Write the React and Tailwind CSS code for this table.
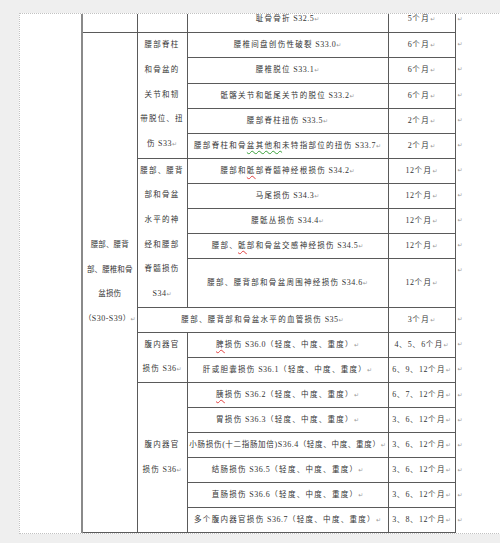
const M = () => (
  <span className="font-['DejaVu_Sans',sans-serif] text-[6px] text-[#9a9a9a] tracking-normal">↵</span>
);

// split a string into CJK runs (inherit tracking) and latin runs (own tracking)
const tx = (s) =>
  s.split(/([A-Za-z0-9.\-() ]+)/).filter(Boolean).map((p, i) =>
    /^[A-Za-z0-9.\-() ]+$/.test(p) ? (
      <span key={i} className="text-[8px] tracking-[0.5px]">{p}</span>
    ) : (
      <span key={i}>{p}</span>
    )
  );

const Red = ({ children }) => (
  <span className="underline decoration-wavy decoration-[#e04040] underline-offset-[2px] decoration-[0.5px]">{children}</span>
);
const Green = ({ children }) => (
  <span className="underline decoration-wavy decoration-[#3aa03a] underline-offset-[2px] decoration-[0.5px]">{children}</span>
);

const c3cls = "border border-[#5a5a5a] p-0 text-center align-middle whitespace-nowrap leading-[24px] tracking-[1.3px]";
const c3tight = "border border-[#5a5a5a] p-0 text-center align-middle whitespace-nowrap leading-[24px] tracking-[0.7px]";
const c4cls = "border border-[#5a5a5a] p-0 text-center align-middle whitespace-nowrap leading-[24px] tracking-[1.4px]";
const multi = "border border-[#5a5a5a] p-0 text-center align-middle whitespace-nowrap leading-[24.7px] tracking-[1.2px]";
const col1 = "border-t border-b border-r border-l-2 border-[#5a5a5a] border-l-[#8a8a8a] p-0 text-center align-middle whitespace-nowrap leading-[24.7px] tracking-[0.1px]";
const endCell = "border-0 p-0 pl-[2px] text-left align-top leading-[24px]";

const r0c1 = "border-b border-r border-l-2 border-[#5a5a5a] border-l-[#8a8a8a] p-0";
const r0c2 = "border-b border-r border-[#5a5a5a] p-0";
const r0c3 = "border-b border-r border-[#5a5a5a] p-0 text-center align-top whitespace-nowrap leading-[10px] tracking-[1.3px]";
const r0c4 = "border-b border-r border-[#5a5a5a] p-0 text-center align-top whitespace-nowrap leading-[10px] tracking-[1.4px]";
const r0c5 = "border-0 p-0 pl-[2px] text-left align-top leading-[10px]";

export default function App() {
  const rows = [
    { h: "h-[25px]", c3: <>{tx("腰椎间盘创伤性破裂 S33.0")}<M /></>, c4: "6个月" },
    { h: "h-[26px]", c3: <>{tx("腰椎脱位 S33.1")}<M /></>, c4: "6个月" },
    { h: "h-[25px]", c3: <>{tx("骶髂关节和骶尾关节的脱位 S33.2")}<M /></>, c4: "6个月" },
    { h: "h-[25px]", c3: <>{tx("腰部脊柱扭伤 S33.5")}<M /></>, c4: "2个月" },
    { h: "h-[25px]", c3: <>{tx("腰部脊柱和骨")}<Green>{tx("盆其他和")}</Green>{tx("未特指部位的扭伤 S33.7")}<M /></>, c4: "2个月" },
  ];
  const rows34 = [
    { h: "h-[25px]", c3: <>{tx("腰部和")}<Red>骶</Red>{tx("部脊髓神经根损伤 S34.2")}<M /></>, c4: "12个月" },
    { h: "h-[25px]", c3: <>{tx("马尾损伤 S34.3")}<M /></>, c4: "12个月" },
    { h: "h-[25px]", c3: <>{tx("腰骶丛损伤 S34.4")}<M /></>, c4: "12个月" },
    { h: "h-[25px]", c3: <>{tx("腰部、")}<Red>骶</Red>{tx("部和骨盆交感神经损伤 S34.5")}<M /></>, c4: "12个月" },
    { h: "h-[49px]", c3: <>{tx("腰部、腰背部和骨盆周围神经损伤 S34.6")}<M /></>, c4: "12个月" },
  ];
  const rows36b = [
    { c3: <><Red>胰</Red>{tx("损伤 S36.2（轻度、中度、重度）")}<M /></>, c4: "6、7、12个月" },
    { c3: <>{tx("胃损伤 S36.3（轻度、中度、重度）")}<M /></>, c4: "3、6、12个月" },
    { c3: <>{tx("小肠损伤(十二指肠加倍)S36.4（轻度、中度、重度）")}<M /></>, c4: "3、6、12个月", tight: true },
    { c3: <>{tx("结肠损伤 S36.5（轻度、中度、重度）")}<M /></>, c4: "3、6、12个月" },
    { c3: <>{tx("直肠损伤 S36.6（轻度、中度、重度）")}<M /></>, c4: "3、6、12个月" },
    { c3: <>{tx("多个腹内器官损伤 S36.7（轻度、中度、重度）")}<M /></>, c4: "3、8、12个月" },
  ];

  return (
    <div className="w-[500px] h-[543px] overflow-hidden bg-[#efefef] pt-[13px] pl-[19px]">
      <div className="w-[560px] h-[521px] bg-white border border-dotted border-[#c2c2c2] pl-[61px] font-['Liberation_Serif','Noto_Sans_CJK_SC',serif] text-[7.5px] text-[#353535]">
        <table className="table-fixed border-collapse w-[393px]">
          <colgroup>
            <col className="w-[55px]" />
            <col className="w-[50px]" />
            <col className="w-[201px]" />
            <col className="w-[67px]" />
            <col className="w-[20px]" />
          </colgroup>
          <tbody>
            <tr className="h-[18px]">
              <td className={r0c1}></td>
              <td className={r0c2}></td>
              <td className={r0c3}>{tx("耻骨骨折 S32.5")}<M /></td>
              <td className={r0c4}>{tx("5个月")}<M /></td>
              <td className={r0c5}><M /></td>
            </tr>
            {rows.map((r, i) => (
              <tr key={"a" + i} className={r.h}>
                {i === 0 && (
                  <td rowSpan={19} className={col1}>
                    {tx("腰部、腰背")}<br />{tx("部、腰椎和骨")}<br />{tx("盆损伤")}<br />{tx("（S30-S39）")}<M />
                  </td>
                )}
                {i === 0 && (
                  <td rowSpan={5} className={multi}>
                    {tx("腰部脊柱")}<br />{tx("和骨盆的")}<br />{tx("关节和韧")}<br />{tx("带脱位、扭")}<br />{tx("伤 S33")}<M />
                  </td>
                )}
                <td className={c3cls}>{r.c3}</td>
                <td className={c4cls}>{tx(r.c4)}<M /></td>
                <td className={endCell}><M /></td>
              </tr>
            ))}
            {rows34.map((r, i) => (
              <tr key={"b" + i} className={r.h}>
                {i === 0 && (
                  <td rowSpan={5} className={multi}>
                    {tx("腰部、腰背")}<br />{tx("部和骨盆")}<br />{tx("水平的神")}<br />{tx("经和腰部")}<br />{tx("脊髓损伤")}<br />{tx("S34")}<M />
                  </td>
                )}
                <td className={c3cls}>{r.c3}</td>
                <td className={c4cls}>{tx(r.c4)}<M /></td>
                <td className={endCell}><M /></td>
              </tr>
            ))}
            <tr className="h-[25px]">
              <td colSpan={2} className={c3cls}>{tx("腰部、腰背部和骨盆水平的血管损伤 S35")}<M /></td>
              <td className={c4cls}>{tx("3个月")}<M /></td>
              <td className={endCell}><M /></td>
            </tr>
            <tr className="h-[25px]">
              <td rowSpan={2} className={multi}>
                {tx("腹内器官")}<br />{tx("损伤 S36")}<M />
              </td>
              <td className={c3cls}><Red>脾</Red>{tx("损伤 S36.0（轻度、中度、重度）")}<M /></td>
              <td className={c4cls}>{tx("4、5、6个月")}<M /></td>
              <td className={endCell}><M /></td>
            </tr>
            <tr className="h-[25px]">
              <td className={c3cls}>{tx("肝或胆囊损伤 S36.1（轻度、中度、重度）")}<M /></td>
              <td className={c4cls}>{tx("6、9、12个月")}<M /></td>
              <td className={endCell}><M /></td>
            </tr>
            {rows36b.map((r, i) => (
              <tr key={"c" + i} className="h-[25px]">
                {i === 0 && (
                  <td rowSpan={6} className={multi}>
                    {tx("腹内器官")}<br />{tx("损伤 S36")}<M />
                  </td>
                )}
                <td className={r.tight ? c3tight : c3cls}>{r.c3}</td>
                <td className={c4cls}>{tx(r.c4)}<M /></td>
                <td className={endCell}><M /></td>
              </tr>
            ))}
          </tbody>
        </table>
      </div>
    </div>
  );
}
